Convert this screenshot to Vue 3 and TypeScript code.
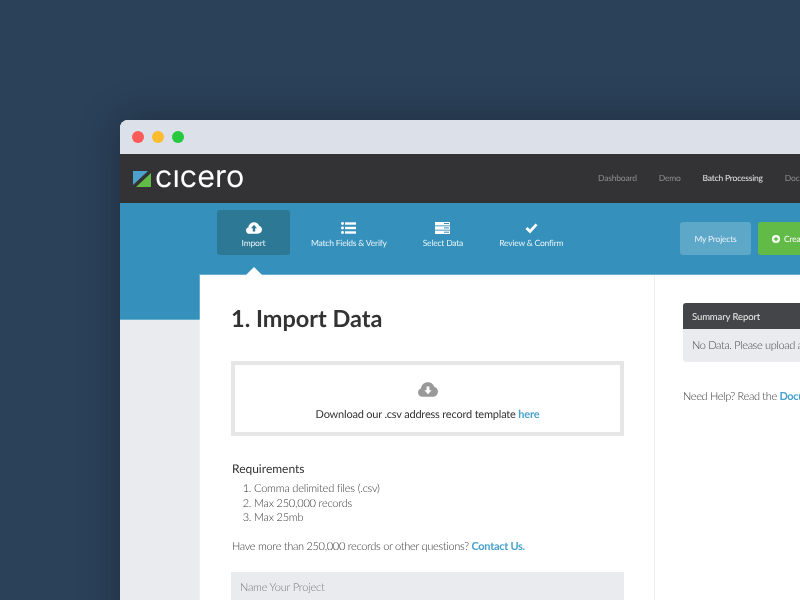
<script setup lang="ts">
const steps = [
  { label: 'Import', icon: 'upload', active: true },
  { label: 'Match Fields & Verify', icon: 'list', active: false },
  { label: 'Select Data', icon: 'server', active: false },
  { label: 'Review & Confirm', icon: 'check', active: false },
]
const navLinks = ['Dashboard', 'Demo', 'Batch Processing', 'Documentation']
const requirements = ['Comma delimited files (.csv)', 'Max 250,000 records', 'Max 25mb']
</script>

<template>
  <div class="stage">
    <div class="window">
      <div class="titlebar">
        <span class="dot red"></span>
        <span class="dot yellow"></span>
        <span class="dot green"></span>
      </div>

      <header class="topbar">
        <div class="logo">
          <svg class="logo-mark" viewBox="0 0 18 18" width="18" height="18">
            <polygon points="0,1 15,1 0,15" fill="#4ba3cb" />
            <polygon points="18,3 18,17 3,17" fill="#62bb46" />
          </svg>
          <span class="logo-text">cıcero</span>
        </div>
        <nav class="nav">
          <a
            v-for="link in navLinks"
            :key="link"
            class="nav-link"
            :class="{ current: link === 'Batch Processing' }"
          >{{ link }}</a>
        </nav>
      </header>

      <div class="stepbar">
        <div class="steps">
          <div v-for="step in steps" :key="step.label" class="step" :class="{ active: step.active }">
            <svg v-if="step.icon === 'upload'" class="step-icon" viewBox="0 0 16 12" width="16" height="12">
              <path d="M3.6 11.8C1.6 11.8 0 10.3 0 8.4c0-1.5 1-2.8 2.4-3.2C2.6 2.9 4.8 .2 8 .2c2.4 0 4.4 1.4 5 3.6 1.8.4 3 2 3 3.8 0 2.3-1.9 4.2-4.2 4.2z" fill="#fff" />
              <path d="M8 2.8 11 6.2H9.2V9.4H6.8V6.2H5z" fill="#2c7895" />
            </svg>
            <svg v-else-if="step.icon === 'list'" class="step-icon" viewBox="0 0 15 12" width="15" height="12">
              <g fill="#fff">
                <rect x="0" y="0" width="3" height="3" rx="1.4" />
                <rect x="0" y="4.5" width="3" height="3" rx="1.4" />
                <rect x="0" y="9" width="3" height="3" rx="1.4" />
                <rect x="4" y="0.3" width="11" height="2.4" />
                <rect x="4" y="4.8" width="11" height="2.4" />
                <rect x="4" y="9.3" width="11" height="2.4" />
              </g>
            </svg>
            <svg v-else-if="step.icon === 'server'" class="step-icon" viewBox="0 0 15 12" width="15" height="12">
              <g fill="#fff">
                <rect x="0" y="0" width="15" height="3.4" />
                <rect x="0" y="4.3" width="15" height="3.4" />
                <rect x="0" y="8.6" width="15" height="3.4" />
              </g>
              <g fill="#3591bb">
                <rect x="9" y="1" width="5" height="1" />
                <rect x="9" y="5.4" width="5" height="1" />
                <rect x="9" y="9.7" width="5" height="1" />
              </g>
            </svg>
            <svg v-else class="step-icon" viewBox="0 0 13 12" width="13" height="12">
              <path d="M1.5 6 5 9.4 11.5 2.4" fill="none" stroke="#fff" stroke-width="2.8" />
            </svg>
            <span>{{ step.label }}</span>
          </div>
        </div>
        <div class="actions">
          <a class="btn btn-ghost">My Projects</a>
          <a class="btn btn-green">
            <svg viewBox="0 0 8 8" width="8" height="8">
              <circle cx="4" cy="4" r="4" fill="#fff" />
              <path d="M4 1.8v4.4M1.8 4h4.4" stroke="#62bb46" stroke-width="1.4" />
            </svg>
            Create New Project
          </a>
        </div>
      </div>

      <div class="body">
        <div class="sidebar"></div>
        <main class="card">
          <section class="main-col">
            <h1>1. Import Data</h1>
            <div class="download">
              <svg viewBox="0 0 20 15" width="20" height="15">
                <path d="M4.5 14.8C2 14.8 0 12.9 0 10.5c0-1.9 1.2-3.5 3-4C3.3 2.9 6 .2 10 .2c3 0 5.5 1.8 6.2 4.5 2.2.5 3.8 2.5 3.8 4.8 0 2.9-2.4 5.3-5.3 5.3z" fill="#999" />
                <path d="M10 12.2 6.4 8.2H8.6V4.6h2.8v3.6h2.2z" fill="#fff" />
              </svg>
              <p>Download our .csv address record template <a>here</a></p>
            </div>
            <h2>Requirements</h2>
            <ol>
              <li v-for="item in requirements" :key="item">{{ item }}</li>
            </ol>
            <p class="more">Have more than 250,000 records or other questions? <a>Contact Us.</a></p>
            <div class="name-input">Name Your Project</div>
          </section>
          <aside class="side-col">
            <div class="report">
              <div class="report-head">Summary Report</div>
              <div class="report-body">No Data. Please upload a file to get started.</div>
            </div>
            <p class="help">Need Help? Read the <a>Documentation</a></p>
          </aside>
        </main>
      </div>
    </div>
  </div>
</template>

<style>
html,
body {
  margin: 0;
  background: #2b4159;
}
</style>

<style scoped>
.stage {
  width: 800px;
  height: 600px;
  overflow: hidden;
  box-sizing: border-box;
  padding: 120px 0 0 120px;
  background: #2b4159;
  font-family: Lato, "Liberation Sans", sans-serif;
  text-rendering: geometricPrecision;
}
.window {
  width: 1000px;
  height: 700px;
  display: flex;
  flex-direction: column;
  border-radius: 8px 0 0 0;
  overflow: hidden;
  background: #fff;
  box-shadow: 0 0 40px rgba(0, 0, 0, 0.3);
}
.titlebar {
  height: 34px;
  flex: none;
  display: flex;
  align-items: center;
  gap: 8px;
  padding-left: 12px;
  background: #dce0e8;
}
.dot {
  width: 12px;
  height: 12px;
  border-radius: 50%;
}
.red { background: #fc5b57; }
.yellow { background: #fdbc2e; }
.green { background: #27c93f; }

.topbar {
  height: 49px;
  flex: none;
  display: flex;
  align-items: center;
  justify-content: space-between;
  background: #333335;
  padding-left: 13px;
}
.logo {
  display: flex;
  align-items: center;
  gap: 4px;
}
.logo-text {
  font-family: Inter, sans-serif;
  font-size: 30.5px;
  font-weight: 400;
  line-height: 30px;
  margin-top: -4px;
  color: #fff;
  will-change: transform;
}
.nav {
  display: flex;
  gap: 22px;
  width: 522px;
  margin-top: -2px;
  font-size: 8.5px;
  letter-spacing: -0.2px;
  will-change: transform;
}
.nav-link {
  color: #8d8d8f;
  white-space: nowrap;
}
.nav-link.current {
  color: #e4e4e4;
}

.stepbar {
  height: 72px;
  flex: none;
  display: flex;
  justify-content: space-between;
  background: #3591bb;
  padding: 7px 0 0 97px;
  box-sizing: border-box;
}
.steps {
  display: flex;
  align-items: flex-start;
  will-change: transform;
}
.step {
  position: relative;
  height: 45px;
  box-sizing: border-box;
  display: flex;
  flex-direction: column;
  align-items: center;
  padding: 12px 18px 0;
  gap: 4px;
  font-size: 8.5px;
  letter-spacing: -0.2px;
  color: #e6f2f7;
  border-radius: 3px;
  white-space: nowrap;
}
.step.active {
  width: 73px;
  margin-right: 3px;
  background: #2c7895;
}
.step.active::after {
  content: '';
  position: absolute;
  left: 50%;
  margin-left: -8px;
  bottom: -20px;
  border: 8px solid transparent;
  border-top-width: 0;
  border-bottom-color: #fff;
}
.step-icon {
  flex: none;
}
.actions {
  display: flex;
  gap: 7px;
  width: 440px;
  align-items: flex-start;
  padding-top: 12px;
  will-change: transform;
}
.btn {
  height: 33px;
  box-sizing: border-box;
  display: flex;
  align-items: center;
  gap: 4px;
  border-radius: 3px;
  font-size: 8.5px;
  letter-spacing: -0.2px;
  color: #e6f2f7;
  white-space: nowrap;
}
.btn-ghost {
  background: #5da7c8;
  padding: 0 14.5px;
}
.btn-green {
  background: #62bb46;
  padding: 0 14px;
  color: #fff;
}

.body {
  flex: 1;
  display: flex;
  background: linear-gradient(#3591bb 44px, #67aecd 44px, #67aecd 45px, #e9ebee 45px);
}
.sidebar {
  width: 79px;
  flex: none;
}
.card {
  flex: 1;
  display: flex;
  background: #fff;
  border-top: 1px solid #67aecd;
  border-left: 1px solid rgba(255, 255, 255, 0.25);
  margin-top: -1px;
  background-clip: padding-box;
}
.main-col {
  width: 455px;
  box-sizing: border-box;
  padding: 0 30px 0 31px;
  border-right: 1px solid #eceef0;
  color: #333;
  will-change: transform;
}
h1 {
  margin: 29px 0 0;
  font-size: 23.5px;
  line-height: 30px;
  font-weight: 700;
  color: #333;
}
.download {
  margin-top: 27px;
  height: 75px;
  box-sizing: border-box;
  border: 4px solid #e6e6e6;
  display: flex;
  flex-direction: column;
  align-items: center;
  padding-top: 17px;
}
.download p {
  margin: 10px 0 0;
  font-size: 11px;
  letter-spacing: -0.2px;
  line-height: 16px;
  color: #333;
}
a {
  color: #4aa3cc;
  font-weight: 700;
}
.nav-link,
.btn {
  font-weight: 400;
}
h2 {
  margin: 24px 0 0 1px;
  font-size: 12px;
  line-height: 18px;
  font-weight: 400;
  color: #333;
}
ol {
  margin: 4px 0 0;
  padding-left: 23px;
  font-size: 11px;
  letter-spacing: -0.2px;
  line-height: 14.7px;
  font-weight: 300;
  color: #333;
}
.more {
  margin: 13px 0 0 1px;
  font-size: 11px;
  letter-spacing: -0.3px;
  line-height: 15px;
  font-weight: 300;
  color: #333;
}
.name-input {
  margin: 18px 0 0;
  height: 40px;
  box-sizing: border-box;
  padding: 9px 9px;
  background: #e9ebee;
  font-size: 11px;
  letter-spacing: -0.2px;
  font-weight: 300;
  color: #777;
}
.side-col {
  flex: 1;
  padding: 28px 0 0 28px;
  font-size: 11px;
  will-change: transform;
}
.report {
  width: 300px;
  border-radius: 3px;
  overflow: hidden;
}
.report-head {
  height: 26px;
  line-height: 29px;
  padding-left: 9px;
  background: #444548;
  color: #eee;
  font-size: 9.5px;
  letter-spacing: -0.1px;
}
.report-body {
  height: 33px;
  line-height: 33px;
  padding-left: 9px;
  background: #e9ebee;
  color: #444;
  font-size: 11px;
  letter-spacing: -0.35px;
  font-weight: 300;
  white-space: nowrap;
}
.help {
  margin: 27px 0 0;
  line-height: 15px;
  font-weight: 300;
  letter-spacing: -0.35px;
  color: #333;
  white-space: nowrap;
}
</style>
